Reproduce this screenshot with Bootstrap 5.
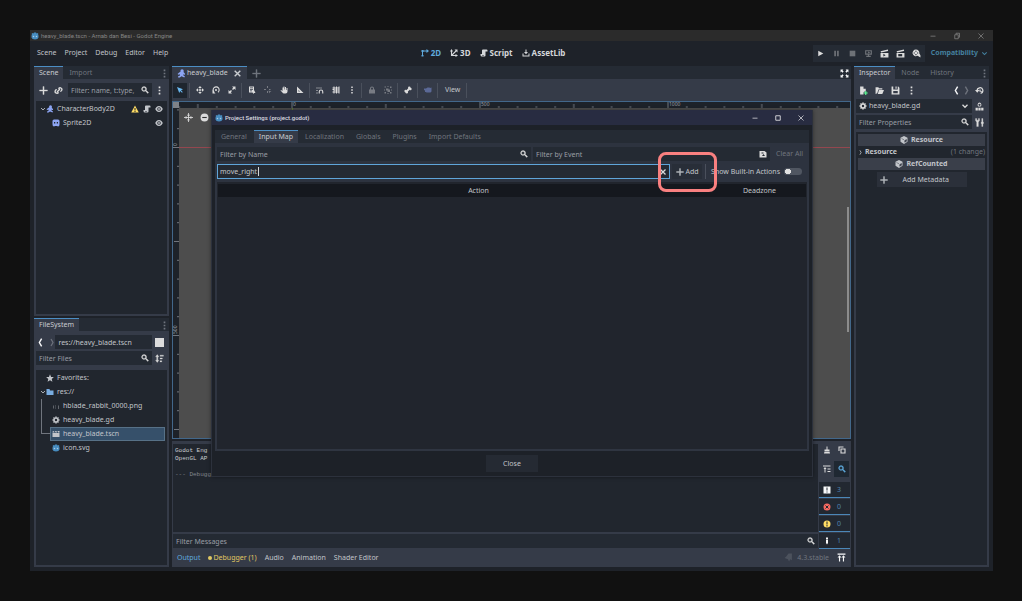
<!DOCTYPE html>
<html lang="en">
<head>
<meta charset="utf-8">
<meta name="viewport" content="width=device-width, initial-scale=1">
<title>heavy_blade.tscn - Arnab dan Besi - Godot Engine</title>
<link href="https://cdn.jsdelivr.net/npm/bootstrap@5.3.0/dist/css/bootstrap.min.css" rel="stylesheet">
<style>
:root{--base:#1e2229;--dock:#353b48;--strip:#252b34;--well:#21262e;--field:#242a33;--txt:#c2c5ca;--dim:#70757e;--acc:#5fa9dc;--icon:#dcdcdc}
body{background:#111;color:var(--txt);font:7px/10px "Noto Sans","Open Sans",sans-serif;min-height:100vh;padding:30px 29px 30px 30px;display:flex}
button,input{font:inherit;color:inherit;background:none;border:0;padding:0;margin:0;min-width:0}
button{display:inline-flex;align-items:center;justify-content:center}
input::placeholder{color:#9a9ea5;opacity:1}
input:focus{outline:0}
table{font:inherit}
svg.ic{width:9px;height:9px;fill:currentColor;flex:none;display:block}
.app{background:var(--base)}
.titlebar{height:11px;background:#2b2b2b;color:#858585;font:6px/11px Roboto,sans-serif;gap:2px;padding:0 8px 0 1px}
.titlebar .ic{width:8px;height:8px}
.menubar{height:25px;padding:0 5px 1px 7px}
.menubar nav{gap:8px}
.modes{gap:9px;padding-left:5px;font-weight:700;font-size:8px;color:#d5d7da}
.modes button{gap:1px}
.modes .ic{width:8px;height:8px;margin-right:1px}
.runbar{background:var(--strip);height:17px;color:var(--icon)}
.runbar button{width:16px;height:17px}
.renderer{font-weight:700;color:#44809f;gap:3px;margin-left:6px}
.renderer .ic{width:7px;height:7px}
.sidecol{width:135px;flex:none;gap:2px}
.tabs{height:13px;background:var(--strip);color:var(--dim);gap:1px}
.tabs button{padding:0 5px;border-top:1px solid transparent;height:13px;gap:1px}
.tabs button.on{border-top-color:#4c8ec4;background:var(--dock);color:#c9ccd0}
.dockbody{background:var(--dock);padding:0 2px 2px;min-height:0}
.well{background:var(--well);min-height:0}
.field{background:var(--field);height:14px;display:flex;align-items:center;padding:0 3px;gap:2px;min-width:0}
.field input{flex:1;height:14px}
.field .ic{color:var(--icon);width:8px;height:8px}
.tool{width:15px;height:16px;flex:none;color:var(--icon)}
.row-tools{height:22px}
.treelist{list-style:none;margin:0;padding:0 4px;color:var(--txt)}
.treelist li{height:14px;display:flex;align-items:center;gap:3px}
.treelist .ic{width:8px;height:8px}
.treelist .fold{width:6px;height:6px;margin-right:-3px}
.treelist .kid{padding-left:12px}
.treelist .top{padding-left:6px}
.treelist .pick{background:#36506a;border:1px solid #577187;margin:0 -2px 0 10px;padding-left:1px}
.nodes{padding-top:1px}
.status{gap:4px;margin-left:auto}
.fstree{position:relative;padding-top:1px}
.guide{position:absolute;left:5px;top:29px;width:9px;height:35px;border:solid #70757e;border-width:0 0 1px 1px}
.c2{background:var(--dock);height:22px;padding:0 1px;gap:2px}
.c2 .tb{width:14px;height:15px;color:var(--icon)}
.c2 .tb .ic{width:8px;height:8px}
.c2 .tb.on{background:#1e252e;color:#6ab8f0}
.c2 .tb.cam{color:#5b6996}
.sep{width:2px;height:15px;border-left:1px solid #4a505c;flex:none}
.viewport2d{background:#4d4d4d;border:1px solid #42678a;min-height:0;display:grid;grid-template:6px 1fr/6px 1fr}
.corner{background:#7e8288}
.ruler{background:#1d2229;overflow:hidden}
.ruler svg,.canvas svg.lines{display:block;width:100%;height:100%}
.canvas{position:relative;overflow:hidden;min-height:0}
.zoomtools{position:absolute;left:5px;top:5px;display:flex;gap:7px;color:#dcdcdc}
.vbar{position:absolute;right:1px;top:30%;height:38%;width:2px;background:#8c8c8c}
.bottomdock{background:var(--dock);height:126px;padding:3px 1px 0;margin-top:2px;flex:none}
.log{font:6px/8px "Liberation Mono",monospace;padding:3px 2px;white-space:pre;overflow:hidden;margin:0;color:#c9ccd0}
.log span{color:#84888f}
.outside{width:32px;flex:none;padding-left:1px;margin:-2px 0 -1px}
.outside .tool{width:15px}
.outside .ic{width:8px;height:8px}
.cnt{width:31px;height:16px;margin-bottom:1px;background:#222831;border-bottom:1px solid #4b87b8;color:#4e83ae;gap:6px;justify-content:flex-start;padding-left:4px}
.bottomtabs{height:19px;padding:0 4px;gap:8px}
.propname{background:#3a3f4a;height:12px;font-weight:700;display:flex;align-items:center;justify-content:center;gap:3px}
.propname .ic{width:8px;height:8px}
.dialog{position:absolute;inset:80px 180px 94px 181px;background:#1d2128;border:1px solid #2c313c;border-top:0;box-shadow:0 0 4px #0006}
.dtitle{height:15px;background:#282c41;color:#dcdce0;font:500 6px/15px Roboto,sans-serif;padding:0 7px 0 3px;gap:2px}
.dtitle .ic{width:8px;height:8px}
.dmain{padding:5px 3px 0;min-height:0}
.dmain .tabs{gap:2px;padding-left:1px}
.dmain .tabs button{padding:0 5px}
.dpanel{background:#2d333f;padding:4px 2px 0;gap:3px;min-height:0}
.namebox{border:1px solid #5fa5da;height:15px;padding:0 2px;position:relative}
.caret{position:absolute;left:40px;top:2px;width:1px;height:9px;background:#d5d7da}
.addwrap{position:relative;z-index:1}
.addbtn{background:#282e38;height:15px;width:30px;gap:2px}
.addbtn .ic{width:8px;height:8px}
.mark-ring{position:absolute;inset:-12px -15px -13px -14px;border:3px solid #f98080;border-radius:8px;pointer-events:none}
.builtin{gap:4px;padding-left:1px;padding-right:5px}
.toggle{appearance:none;width:18px;height:7px;border-radius:4px;background:radial-gradient(circle at 4px 50%,#e0e0e0 0 3px,#505661 3px)}
.list{border:2px solid #2f3541;border-top:0;background:#21252d;padding:2px 1px;margin:0 -2px}
.list table{width:100%;table-layout:fixed;background:#15181e;line-height:12px}
.list th{font-weight:400;text-align:center;padding:0;height:13px}
.closebtn{width:52px;height:17px;background:#252a33}
.addmeta{background:#2b303a;width:90px;height:15px;gap:15px;margin-top:1px;padding-left:3px;justify-content:flex-start}
.addmeta .ic{width:8px;height:8px}
.muted{color:var(--dim)}
.faint{opacity:.4}
</style>
</head>
<body>
<svg width="0" height="0" class="position-absolute" aria-hidden="true">
<defs>
<symbol id="godot" viewBox="0 0 16 16"><path d="M2 5 1 4l2-2 2 1 1-2h4l1 2 2-1 2 2-1 1 1 2v4q-1 4-7 4t-7-4V7z" fill="#478cbf"/><circle cx="5" cy="9" r="1.500" fill="#a9cbe6"/><circle cx="11" cy="9" r="1.500" fill="#a9cbe6"/></symbol>
<symbol id="plus" viewBox="0 0 16 16"><path d="M7 1h2v6h6v2H9v6H7V9H1V7h6z" stroke="currentColor" stroke-width=".6"/></symbol>
<symbol id="link" viewBox="0 0 16 16"><path d="M8 5a3.200 3.200 0 1 1 3 4.500M8 11a3.200 3.200 0 1 1-3-4.500M5.500 10.500l5-5" fill="none" stroke="currentColor" stroke-width="2.500"/></symbol>
<symbol id="search" viewBox="0 0 16 16"><path d="M6 1a5 5 0 1 0 2.800 9.200L13.500 15l1.800-1.800-4.900-4.500A5 5 0 0 0 6 1zm0 2a3 3 0 1 1 0 6 3 3 0 0 1 0-6z" stroke="currentColor" stroke-width=".5"/></symbol>
<symbol id="dots" viewBox="0 0 16 16"><path d="M6.500 1h3v3h-3zm0 5.500h3v3h-3zm0 5.500h3v3h-3z"/></symbol>
<symbol id="down" viewBox="0 0 16 16"><path d="m3 5.500 5 5 5-5" fill="none" stroke="currentColor" stroke-width="2.500"/></symbol>
<symbol id="left" viewBox="0 0 16 16"><path d="M10 1 6 8l4 7" fill="none" stroke="currentColor" stroke-width="2.500"/></symbol>
<symbol id="right" viewBox="0 0 16 16"><path d="m6 1 4 7-4 7" fill="none" stroke="currentColor" stroke-width="2.500"/></symbol>
<symbol id="body2d" viewBox="0 0 16 16"><circle cx="9" cy="3.500" r="3"/><path d="M6 5h5l3 3v2h-2l-1-1v2l3 2-1 2-5-2-3 2H2v-2l3-1V9L3 10 1 9l3-3z"/></symbol>
<symbol id="sprite" viewBox="0 0 16 16"><path d="M4 1h8q3 0 3 3v7q0 4-3 4l-2-1H6l-2 1q-3 0-3-4V4q0-3 3-3z"/><path d="M4 6h2.500v3H4zm5.500 0H12v3H9.500z" fill="#21262e"/></symbol>
<symbol id="warn" viewBox="0 0 16 16"><path d="M8 1 .5 15h15z" fill="#ffdd65"/><path d="M7 6h2v5H7zm0 6h2v2H7z" fill="#222"/></symbol>
<symbol id="script" viewBox="0 0 16 16"><path d="M6 1q-2 0-2 2v7H1v2q0 3 3 3h5q2 0 2-2V5h4V3q0-2-2-2z"/><path d="M4 12h4v1H4z" fill="#21262e"/></symbol>
<symbol id="eye" viewBox="0 0 16 16"><path d="M8 2C4 2 1.500 5 .5 8c1 3 3.500 6 7.500 6s6.500-3 7.500-6C14.500 5 12 2 8 2zm0 2.500a3.500 3.500 0 1 1 0 7 3.500 3.500 0 0 1 0-7z"/><circle cx="8" cy="8" r="1.800"/></symbol>
<symbol id="x" viewBox="0 0 16 16"><path d="m3 3 10 10M13 3 3 13" stroke="currentColor" stroke-width="2.500"/></symbol>
<symbol id="x1" viewBox="0 0 16 16"><path d="m3 3 10 10M13 3 3 13" stroke="currentColor" stroke-width="1.500"/></symbol>
<symbol id="min" viewBox="0 0 16 16"><path d="M3 7.500h10V9H3z"/></symbol>
<symbol id="max" viewBox="0 0 16 16"><path d="M3.500 3.500h9v9h-9z" fill="none" stroke="currentColor" stroke-width="1.800"/></symbol>
<symbol id="restore" viewBox="0 0 16 16"><path d="M3.500 5.500h7v8h-7zM6 5V2.500h7v8h-2" fill="none" stroke="currentColor" stroke-width="1.500"/></symbol>
<symbol id="m2d" viewBox="0 0 16 16"><path d="M3 14V4h9" fill="none" stroke="currentColor" stroke-width="2"/><path d="m11 0 5 4-5 4zM1 2h4v4H1zM1 12h4v3H1z"/></symbol>
<symbol id="m3d" viewBox="0 0 16 16"><path d="M3 3v10h11M4 12l9-9" fill="none" stroke="currentColor" stroke-width="2.200"/><path d="M0 5 3 0l3 5zm11 5 5 3-5 3zM9 1h6v6z"/></symbol>
<symbol id="lib" viewBox="0 0 16 16"><path d="M7 1h2v5h3l-4 4.500L4 6h3zM1 9h2v4h10V9h2v6H1z"/></symbol>
<symbol id="play" viewBox="0 0 16 16"><path d="M4 3v10l9-5z"/></symbol>
<symbol id="pause" viewBox="0 0 16 16"><path d="M4 3h3v10H4zm5 0h3v10H9z"/></symbol>
<symbol id="stop" viewBox="0 0 16 16"><path d="M3 3h10v10H3z"/></symbol>
<symbol id="remote" viewBox="0 0 16 16"><path d="M2 2h12v8H9v2h3v2H4v-2h3v-2H2zm2 2v4h8V4z"/><path d="m7 4 4 2-4 2z"/></symbol>
<symbol id="clap" viewBox="0 0 16 16"><path d="m1 4 13-3 .5 2.500L2 6zm0 3h14v8H1z"/><path d="M6 8.500v5l4-2.500z" fill="#252b34"/></symbol>
<symbol id="clap2" viewBox="0 0 16 16"><path d="m1 4 13-3 .5 2.500L2 6zm0 3h14v8H1z"/><path d="M4 9h7v4H4z" fill="#252b34"/></symbol>
<symbol id="reel" viewBox="0 0 16 16"><path d="M7 1a6 6 0 1 0 3 11.200L15 15v-4l-2-3A6 6 0 0 0 7 1z"/><path d="M6 3h2v2H6zM3 6h2v2H3zm6 0h2v2H9zM6 9h2v2H6z" fill="#252b34"/></symbol>
<symbol id="cursor" viewBox="0 0 16 16"><path d="m2 2 4.500 12 2-4 3.500 3.500 1.500-1.500L10 8.500l4-2z"/></symbol>
<symbol id="move" viewBox="0 0 16 16"><path d="m8 0 3.500 4h-7zm0 16 3.500-4h-7zM0 8l4-3.500v7zm16 0-4-3.500v7zM7 5h2v2h2v2H9v2H7V9H5V7h2z"/></symbol>
<symbol id="rotate" viewBox="0 0 16 16"><path d="M4 12A6 6 0 1 1 12 12.500" fill="none" stroke="currentColor" stroke-width="2.200"/><path d="M1 8v7h6z"/><circle cx="8" cy="8" r="2"/></symbol>
<symbol id="scale" viewBox="0 0 16 16"><path d="M8 1h7v7l-2.500-2.500-2.500 2.500-2-2L10.500 3.500zM1 8l2.500 2.500L6 8l2 2-2.500 2.500L8 15H1z"/></symbol>
<symbol id="listsel" viewBox="0 0 16 16"><path d="M2 1h10v7l3 6h-3l-1 2-2-3H2z"/><path d="M4 3h6v1.500H4zm0 3h6v1.500H4zm0 3h4v1.500H4z" fill="#353b48"/></symbol>
<symbol id="pivot" viewBox="0 0 16 16"><path d="M6 0h2v4H6zM0 6h4v2H0zm6 4h2v4H6zm4-4h3v2h-3zM9 9l6 2-3 1-1 3z"/></symbol>
<symbol id="hand" viewBox="0 0 16 16"><path d="M7 1h2v6h1V2h2v6h1V4h2v7q0 4-4 4H8q-2 0-4-3L1 9l1-1 3 2V3h2z"/></symbol>
<symbol id="rulertool" viewBox="0 0 16 16"><path d="M2 1v13h13zm3 7 3 3H5z" fill-rule="evenodd"/></symbol>
<symbol id="snap" viewBox="0 0 16 16"><path d="M1 3h2v2H1zm4 0h2v2H5zm4 0h2v2H9zM1 8h2v2H1zm0 5h2v2H1z"/><path d="M6.500 15v-3.500a3.500 3.500 0 0 1 7 0V15" fill="none" stroke="currentColor" stroke-width="2.200"/></symbol>
<symbol id="grid" viewBox="0 0 16 16"><path d="M3 1h2v2h3V1h2v2h3V1h2v14h-2v-2h-3v2H8v-2H5v2H3v-2H1v-2h2V8H1V6h2V5H1V3h2zm2 4v2h3V5zm5 0v2h3V5zM5 9v2h3V9zm5 0v2h3V9z" fill-rule="evenodd"/></symbol>
<symbol id="lock" viewBox="0 0 16 16"><path d="M8 1a4 4 0 0 0-4 4v2H2v8h12V7h-2V5a4 4 0 0 0-4-4zm0 2a2 2 0 0 1 2 2v2H6V5a2 2 0 0 1 2-2z"/></symbol>
<symbol id="group" viewBox="0 0 16 16"><path d="M1 1h3v2H1zm5 0h4v1H6zm6 0h3v3h-3zM1 6h1v4H1zm0 6h3v3H1zm5 2h4v1H6zm6-2h3v3h-3zM4 5h5v2h3v5H7V9H4zm10 1h1v4h-1z"/></symbol>
<symbol id="bone" viewBox="0 0 16 16"><path d="M4.500 11.500l7-7" stroke="currentColor" stroke-width="4"/><circle cx="10.500" cy="3.500" r="2.500"/><circle cx="12.800" cy="5.800" r="2.500"/><circle cx="3.200" cy="10.200" r="2.500"/><circle cx="5.500" cy="12.500" r="2.500"/></symbol>
<symbol id="cloud" viewBox="0 0 16 16"><path d="M7 3h4l1 1 3-1v8l-2 2H5l-1-1H2V9L0 8V5h4z"/></symbol>
<symbol id="expand" viewBox="0 0 16 16"><path d="M1 1h5L4.500 2.500l2 2-2 2-2-2L1 6zm14 0h-5l1.500 1.500-2 2 2 2 2-2L15 6zM1 15h5l-1.500-1.500 2-2-2-2-2 2L1 10zm14 0h-5l1.500-1.500-2-2 2-2 2 2L15 10z"/></symbol>
<symbol id="center" viewBox="0 0 16 16"><path d="M8 0v16M0 8h16" stroke="currentColor" stroke-width="1.500"/><path d="m5 3 3 3 3-3zm0 10 3-3 3 3zM3 5l3 3-3 3zm10 0-3 3 3 3z"/></symbol>
<symbol id="zoomout" viewBox="0 0 16 16"><circle cx="8" cy="8" r="7"/><path d="M4 7h8v2H4z" fill="#333"/></symbol>
<symbol id="star" viewBox="0 0 16 16"><path d="m8 .5 2.200 5.300 5.500.4-4.200 3.700 1.300 5.600L8 12.500l-4.800 3 1.300-5.600L.3 6.200l5.500-.4z"/></symbol>
<symbol id="folder" viewBox="0 0 16 16"><path d="M1 2h6l1 3h7v9H1z" fill="#79ace0"/></symbol>
<symbol id="bars" viewBox="0 0 16 16"><path d="M2 7h2v6H2zm5-1h1v8H7zm5 1h2v7h-2z"/></symbol>
<symbol id="gear" viewBox="0 0 16 16"><path d="M6.500 1h3v3h-3zm0 11h3v3h-3zM1 6.500h3v3H1zm11 0h3v3h-3zM2 4l2-2 2 2-2 2zm8 8 2-2 2 2-2 2zM2 12l2-2 2 2-2 2zm8-8 2-2 2 2-2 2z"/><circle cx="8" cy="8" r="3.800" fill="none" stroke="currentColor" stroke-width="2.800"/></symbol>
<symbol id="scene" viewBox="0 0 16 16"><path d="m1 3 3-1 1 3H1zm5-1h3l1 3H7zm5 0h4v3h-3zM1 6h14v8H1z"/></symbol>
<symbol id="sort" viewBox="0 0 16 16"><path d="m4 1 3 4H5v6h2l-3 4-3-4h2V5H1zm5 1h6v2H9zm0 5h4v2H9zm0 5h3v2H9z" stroke="currentColor" stroke-width=".5"/></symbol>
<symbol id="newdoc" viewBox="0 0 16 16"><path d="M2 1h6v4h4v4h-2v2H8v4H2z"/><path d="M11 9h2v2.500h2.500v2H13V16h-2v-2.500H8.500v-2H11z" fill="#5fff97"/></symbol>
<symbol id="open" viewBox="0 0 16 16"><path d="M1 2h5l1 2h6v2H6L4 13l-3 1zm6 5h9l-3 7H5z"/></symbol>
<symbol id="save" viewBox="0 0 16 16"><path d="M1 1h3v5h8V1h1l2 2v12H1zm7 0h2v4H8zM4 9v4h8V9z" fill-rule="evenodd"/></symbol>
<symbol id="history" viewBox="0 0 16 16"><path d="M4 9a5 5 0 1 1 6 4" fill="none" stroke="currentColor" stroke-width="2.200"/><path d="M0 7h8l-4 5zm8-1h2v3h3v1H8z"/></symbol>
<symbol id="docs" viewBox="0 0 16 16"><path d="M8 1a4 4 0 0 1 2 7H6a4 4 0 0 1 2-7zm0 2a2 2 0 1 0 0 4 2 2 0 0 0 0-4zM1 10h4v5H1zm5 0h4v5H6zm5 0h4v5h-4z" fill-rule="evenodd"/></symbol>
<symbol id="tools" viewBox="0 0 16 16"><path d="M1 1v4l2 2v8h3V7l2-2V1H6v3H3V1zM12 1h2v6h1v3h-1v5h-2v-5h-1V7h1z" stroke="currentColor" stroke-width=".5"/></symbol>
<symbol id="cube" viewBox="0 0 16 16"><path d="m8 0 7 3.500v8L8 16l-7-4.500v-8z"/><path d="M8 7.500 3 5M9.500 9l3.500-2v3.500l-3.500 2z" fill="#3a3f4a" stroke="#3a3f4a"/></symbol>
<symbol id="broom" viewBox="0 0 16 16"><path d="M7 1h2v6h4v3H3V7h4zM3 11h10l1 4H2z"/></symbol>
<symbol id="copy" viewBox="0 0 16 16"><path d="M2 10V2h9M6 6h8v8H6z" fill="none" stroke="currentColor" stroke-width="2.200"/></symbol>
<symbol id="collapse" viewBox="0 0 16 16"><path d="M0 1h15v2H0zm4 3 3 4H5v7H3V8H1zm5 3h6v2H9zm0 5h6v2H9z"/></symbol>
<symbol id="msg" viewBox="0 0 16 16"><path d="M1 1h14v14H1zm6 2v6h2V3zm0 8v2h2v-2z" fill-rule="evenodd"/></symbol>
<symbol id="err" viewBox="0 0 16 16"><circle cx="8" cy="8" r="7" fill="#f76a61"/><path d="m5 5 6 6m0-6-6 6" stroke="#222831" stroke-width="2"/></symbol>
<symbol id="wrn" viewBox="0 0 16 16"><circle cx="8" cy="8" r="7" fill="#ffdd65"/><path d="M7 3h2v6H7zm0 7h2v3H7z" fill="#222831"/></symbol>
<symbol id="edit" viewBox="0 0 16 16"><path d="M6 1h4v3H6zm0 4h4v7l-2 3-2-3z"/></symbol>
<symbol id="pin" viewBox="0 0 16 16"><path d="M8 1h6v12l-3-2-2 4-2-4-6-2 3-3z"/></symbol>
<symbol id="raise" viewBox="0 0 16 16"><path d="M1 1h14v2H1zm3.500 3L8 8H5.500v7h-2V8H1zm7 0L15 8h-2.500v7h-2V8H8z"/></symbol>
<symbol id="joy" viewBox="0 0 16 16"><path d="M1 2h10l4 3v10H1zm4 3v2h4V5zm4 3-3 4h6z" fill-rule="evenodd"/></symbol>
<pattern id="ticksH" x="112.500" y="0" width="188" height="6" patternUnits="userSpaceOnUse"><path d="M.5 0v6M94.300 2v4M19.300 4v2M38.100 4v2M56.900 4v2M75.700 4v2M113.300 4v2M132.100 4v2M150.900 4v2M169.700 4v2" stroke="#70757d"/></pattern>
<pattern id="ticksV" x="0" y="39" width="6" height="188" patternUnits="userSpaceOnUse"><path d="M0 .5h6M1 94.500h5M4 19.300h2M4 38.100h2M4 56.900h2M4 75.700h2M4 113.300h2M4 132.100h2M4 150.900h2M4 169.700h2" stroke="#70757d"/></pattern>
</defs>
</svg>

<div class="app flex-fill d-flex flex-column position-relative">
  <header class="titlebar d-flex align-items-center">
    <svg class="ic"><use href="#godot"/></svg><span>heavy_blade.tscn - Arnab dan Besi - Godot Engine</span>
    <div class="ms-auto d-flex gap-3">
      <button aria-label="Minimize"><svg class="ic"><use href="#min"/></svg></button>
      <button aria-label="Restore"><svg class="ic"><use href="#restore"/></svg></button>
      <button aria-label="Close window"><svg class="ic"><use href="#x1"/></svg></button>
    </div>
  </header>

  <div class="menubar d-flex align-items-center">
    <nav class="d-flex"><button>Scene</button><button>Project</button><button>Debug</button><button>Editor</button><button>Help</button></nav>
    <div class="modes d-flex mx-auto">
      <button style="color:var(--acc)"><svg class="ic"><use href="#m2d"/></svg>2D</button>
      <button><svg class="ic"><use href="#m3d"/></svg>3D</button>
      <button><svg class="ic"><use href="#script"/></svg>Script</button>
      <button><svg class="ic"><use href="#lib"/></svg>AssetLib</button>
    </div>
    <div class="runbar d-flex">
      <button aria-label="Run"><svg class="ic"><use href="#play"/></svg></button>
      <button aria-label="Pause" class="faint"><svg class="ic"><use href="#pause"/></svg></button>
      <button aria-label="Stop" class="faint"><svg class="ic"><use href="#stop"/></svg></button>
      <button aria-label="Remote" class="faint"><svg class="ic"><use href="#remote"/></svg></button>
      <button aria-label="Run scene"><svg class="ic"><use href="#clap"/></svg></button>
      <button aria-label="Run custom scene"><svg class="ic"><use href="#clap2"/></svg></button>
      <button aria-label="Movie maker"><svg class="ic"><use href="#reel"/></svg></button>
    </div>
    <button class="renderer">Compatibility<svg class="ic"><use href="#down"/></svg></button>
  </div>

  <main class="d-flex flex-fill px-1 pb-1" style="gap:3px">
    <div class="sidecol d-flex flex-column">
      <section class="d-flex flex-column flex-fill">
        <div class="tabs d-flex"><button class="on">Scene</button><button>Import</button><button class="ms-auto px-0" aria-label="Dock menu"><svg class="ic"><use href="#dots"/></svg></button></div>
        <div class="dockbody flex-fill d-flex flex-column">
          <div class="row-tools d-flex align-items-center">
            <button class="tool" aria-label="Add node"><svg class="ic"><use href="#plus"/></svg></button>
            <button class="tool" aria-label="Instance scene"><svg class="ic"><use href="#link"/></svg></button>
            <label class="field flex-fill" style="margin-left:2px"><input type="text" placeholder="Filter: name, t:type," aria-label="Filter nodes"><svg class="ic"><use href="#search"/></svg></label>
            <button class="tool" aria-label="More"><svg class="ic"><use href="#dots"/></svg></button>
          </div>
          <div class="well flex-fill">
            <ul class="treelist nodes">
              <li><svg class="ic fold"><use href="#down"/></svg><svg class="ic" style="color:#8da5f3"><use href="#body2d"/></svg>CharacterBody2D<span class="status d-flex"><svg class="ic"><use href="#warn"/></svg><svg class="ic"><use href="#script"/></svg><svg class="ic"><use href="#eye"/></svg></span></li>
              <li class="kid"><svg class="ic" style="color:#8da5f3"><use href="#sprite"/></svg>Sprite2D<svg class="ic ms-auto"><use href="#eye"/></svg></li>
            </ul>
          </div>
        </div>
      </section>
      <section class="d-flex flex-column" style="height:249px">
        <div class="tabs d-flex"><button class="on">FileSystem</button><button class="ms-auto px-0" aria-label="Dock menu"><svg class="ic"><use href="#dots"/></svg></button></div>
        <div class="dockbody flex-fill d-flex flex-column">
          <div class="row-tools d-flex align-items-center">
            <button class="me-1 text-light" aria-label="Back"><svg class="ic"><use href="#left"/></svg></button>
            <button class="faint" aria-label="Forward"><svg class="ic" style="width:8px"><use href="#right"/></svg></button>
            <label class="field flex-fill"><input type="text" value="res://heavy_blade.tscn" aria-label="Path"></label>
            <button class="tool" aria-label="Split mode"><svg class="ic"><path d="M0 0h9v9H0z"/></svg></button>
          </div>
          <div class="d-flex align-items-center mb-1" style="margin-top:-3px">
            <label class="field flex-fill"><input type="text" placeholder="Filter Files" aria-label="Filter files"><svg class="ic"><use href="#search"/></svg></label>
            <button class="tool" aria-label="Sort"><svg class="ic"><use href="#sort"/></svg></button>
          </div>
          <div class="well flex-fill">
            <ul class="treelist fstree">
              <li class="top"><svg class="ic"><use href="#star"/></svg>Favorites:</li>
              <li><svg class="ic fold"><use href="#down"/></svg><svg class="ic"><use href="#folder"/></svg>res://</li>
              <li class="kid"><svg class="ic faint"><use href="#bars"/></svg>hblade_rabbit_0000.png</li>
              <li class="kid"><svg class="ic"><use href="#gear"/></svg>heavy_blade.gd</li>
              <li class="pick"><i class="guide"></i><svg class="ic"><use href="#scene"/></svg>heavy_blade.tscn</li>
              <li class="kid"><svg class="ic"><use href="#godot"/></svg>icon.svg</li>
            </ul>
          </div>
        </div>
      </section>
    </div>

    <div class="flex-fill d-flex flex-column" style="min-width:0">
      <div class="tabs d-flex"><button class="on"><svg class="ic" style="color:#8da5f3"><use href="#body2d"/></svg>heavy_blade<svg class="ic ms-1"><use href="#x"/></svg></button><button class="px-1" aria-label="New tab"><svg class="ic"><use href="#plus"/></svg></button><button class="ms-auto text-light" style="padding:0 2px" aria-label="Distraction free"><svg class="ic"><use href="#expand"/></svg></button></div>
      <div class="c2 d-flex align-items-center">
        <button class="tb on" aria-label="Select"><svg class="ic"><use href="#cursor"/></svg></button><i class="sep"></i>
        <button class="tb" aria-label="Move"><svg class="ic"><use href="#move"/></svg></button><button class="tb" aria-label="Rotate"><svg class="ic"><use href="#rotate"/></svg></button><button class="tb" aria-label="Scale"><svg class="ic"><use href="#scale"/></svg></button><i class="sep"></i>
        <button class="tb" aria-label="List select"><svg class="ic"><use href="#listsel"/></svg></button><button class="tb faint" aria-label="Pivot"><svg class="ic"><use href="#pivot"/></svg></button><button class="tb" aria-label="Pan"><svg class="ic"><use href="#hand"/></svg></button><button class="tb" aria-label="Ruler"><svg class="ic"><use href="#rulertool"/></svg></button><i class="sep"></i>
        <button class="tb" aria-label="Smart snap"><svg class="ic"><use href="#snap"/></svg></button><button class="tb" aria-label="Grid snap"><svg class="ic"><use href="#grid"/></svg></button><button class="tb" aria-label="Snap options"><svg class="ic"><use href="#dots"/></svg></button><i class="sep"></i>
        <button class="tb faint" aria-label="Lock"><svg class="ic"><use href="#lock"/></svg></button><button class="tb faint" aria-label="Group"><svg class="ic"><use href="#group"/></svg></button><i class="sep"></i>
        <button class="tb" aria-label="Skeleton"><svg class="ic"><use href="#bone"/></svg></button><i class="sep"></i>
        <button class="tb cam" aria-label="Camera override"><svg class="ic"><use href="#cloud"/></svg></button><i class="sep"></i>
        <button class="px-1">View</button><i class="sep"></i>
      </div>
      <div class="viewport2d flex-fill">
        <div class="corner"></div>
        <div class="ruler"><svg><rect width="100%" height="100%" fill="url(#ticksH)"/><g font-size="5" fill="#9a9ea4"><text x="114" y="4">0</text><text x="302" y="4">500</text><text x="490" y="4">1000</text></g></svg></div>
        <div class="ruler"><svg><rect width="100%" height="100%" fill="url(#ticksV)"/><g font-size="5" fill="#9a9ea4"><text transform="translate(4 38) rotate(-90)">0</text><text transform="translate(4 226) rotate(-90)">500</text></g></svg></div>
        <div class="canvas">
          <svg class="lines"><path d="M0 39.500h2000" stroke="#93474f"/><path d="M113.500 0v2000" stroke="#5d7a36"/></svg>
          <div class="zoomtools"><svg class="ic"><use href="#center"/></svg><svg class="ic"><use href="#zoomout"/></svg></div>
          <div class="vbar"></div>
        </div>
      </div>
      <section class="bottomdock d-flex flex-column">
        <div class="d-flex flex-fill">
          <div class="flex-fill d-flex flex-column" style="min-width:0">
            <pre class="log well flex-fill">Godot Eng
OpenGL AP

<span>--- Debugging process stopped ---</span></pre>
            <label class="field" style="margin-top:2px"><input type="text" placeholder="Filter Messages" aria-label="Filter messages"><svg class="ic"><use href="#search"/></svg></label>
          </div>
          <div class="outside d-flex flex-column">
            <div class="d-flex"><button class="tool" aria-label="Clear"><svg class="ic"><use href="#broom"/></svg></button><button class="tool" aria-label="Copy"><svg class="ic"><use href="#copy"/></svg></button></div>
            <div class="d-flex" style="margin-top:3px"><button class="tool" aria-label="Collapse"><svg class="ic"><use href="#collapse"/></svg></button><button class="tool" style="background:#1f2832;color:var(--acc)" aria-label="Search log"><svg class="ic"><use href="#search"/></svg></button></div>
            <div class="mt-auto d-flex flex-column">
              <button class="cnt"><svg class="ic text-light"><use href="#msg"/></svg>3</button>
              <button class="cnt"><svg class="ic"><use href="#err"/></svg>0</button>
              <button class="cnt"><svg class="ic"><use href="#wrn"/></svg>0</button>
              <button class="cnt mb-0"><svg class="ic text-light"><use href="#edit"/></svg>1</button>
            </div>
          </div>
        </div>
        <div class="bottomtabs d-flex align-items-center">
          <button style="color:var(--acc)">Output</button><button style="color:#e2c963"><svg class="ic" style="width:5px"><circle cx="2" cy="5" r="2"/></svg>Debugger (1)</button><button>Audio</button><button>Animation</button><button>Shader Editor</button>
          <span class="ms-auto d-flex align-items-center muted" style="gap:4px"><svg class="ic faint"><use href="#pin"/></svg>4.3.stable</span><button class="text-light" aria-label="Expand panel"><svg class="ic"><use href="#raise"/></svg></button>
        </div>
      </section>
    </div>

    <section class="sidecol d-flex flex-column" style="gap:0">
      <div class="tabs d-flex"><button class="on">Inspector</button><button>Node</button><button>History</button><button class="ms-auto px-0" aria-label="Dock menu"><svg class="ic"><use href="#dots"/></svg></button></div>
      <div class="dockbody flex-fill d-flex flex-column">
        <div class="row-tools d-flex align-items-center" style="gap:1px">
          <button class="tool" aria-label="New resource"><svg class="ic"><use href="#newdoc"/></svg></button><button class="tool" aria-label="Open"><svg class="ic"><use href="#open"/></svg></button><button class="tool" aria-label="Save"><svg class="ic"><use href="#save"/></svg></button><button class="tool" aria-label="More"><svg class="ic"><use href="#dots"/></svg></button>
          <button class="ms-auto text-light" aria-label="Previous"><svg class="ic"><use href="#left"/></svg></button><button class="faint" aria-label="Next"><svg class="ic"><use href="#right"/></svg></button><button class="tool" aria-label="History list"><svg class="ic"><use href="#history"/></svg></button>
        </div>
        <div class="d-flex align-items-center" style="margin-top:-3px"><button class="field flex-fill justify-content-start"><svg class="ic"><use href="#gear"/></svg>heavy_blade.gd<svg class="ic ms-auto"><use href="#down"/></svg></button><button class="tool" aria-label="Documentation"><svg class="ic"><use href="#docs"/></svg></button></div>
        <div class="d-flex align-items-center" style="margin-bottom:2px"><label class="field flex-fill"><input type="text" placeholder="Filter Properties" aria-label="Filter properties"><svg class="ic"><use href="#search"/></svg></label><button class="tool" aria-label="Property tools"><svg class="ic"><use href="#tools"/></svg></button></div>
        <div class="well flex-fill d-flex flex-column" style="gap:1px;padding:2px">
          <div class="propname"><svg class="ic"><use href="#cube"/></svg>Resource</div>
          <div class="d-flex align-items-center" style="gap:2px"><svg class="ic" style="width:5px;height:5px"><use href="#right"/></svg><b>Resource</b><span class="ms-auto muted">(1 change)</span></div>
          <div class="propname"><svg class="ic"><use href="#cube"/></svg>RefCounted</div>
          <button class="align-self-center addmeta"><svg class="ic"><use href="#plus"/></svg>Add Metadata</button>
        </div>
      </div>
    </section>
  </main>

  <div class="dialog d-flex flex-column" role="dialog" aria-label="Project Settings">
    <div class="dtitle d-flex align-items-center"><svg class="ic"><use href="#godot"/></svg><span>Project Settings (project.godot)</span>
      <div class="ms-auto d-flex" style="gap:15px"><button aria-label="Minimize dialog"><svg class="ic"><use href="#min"/></svg></button><button aria-label="Maximize dialog"><svg class="ic"><use href="#max"/></svg></button><button aria-label="Close dialog"><svg class="ic"><use href="#x1"/></svg></button></div>
    </div>
    <div class="dmain flex-fill d-flex flex-column">
      <div class="tabs d-flex"><button>General</button><button class="on">Input Map</button><button>Localization</button><button>Globals</button><button>Plugins</button><button>Import Defaults</button></div>
      <div class="dpanel flex-fill d-flex flex-column">
        <div class="d-flex align-items-center" style="gap:2px">
          <label class="field" style="flex:4"><input type="text" placeholder="Filter by Name" aria-label="Filter by name"><svg class="ic"><use href="#search"/></svg></label>
          <label class="field" style="flex:3"><input type="text" placeholder="Filter by Event" aria-label="Filter by event"><svg class="ic"><use href="#joy"/></svg></label>
          <button class="muted" style="padding:0 4px">Clear All</button>
        </div>
        <div class="d-flex align-items-center" style="gap:2px">
          <label class="field namebox flex-fill"><input type="text" value="move_right" aria-label="Add new action"><i class="caret"></i><svg class="ic"><use href="#x"/></svg></label>
          <div class="addwrap"><button class="addbtn"><svg class="ic"><use href="#plus"/></svg>Add</button><span class="mark-ring"></span></div>
          <div class="builtin d-flex align-items-center"><i class="sep"></i><label for="builtin">Show Built-in Actions</label><input type="checkbox" id="builtin" class="toggle"></div>
        </div>
        <div class="list flex-fill"><table><colgroup><col><col style="width:41px"><col style="width:26px"></colgroup><thead><tr><th>Action</th><th>Deadzone</th><th></th></tr></thead></table></div>
      </div>
      <div class="text-center py-1"><button class="closebtn">Close</button></div>
    </div>
  </div>
</div>
<script src="https://cdn.jsdelivr.net/npm/bootstrap@5.3.0/dist/js/bootstrap.bundle.min.js"></script>
</body>
</html>
